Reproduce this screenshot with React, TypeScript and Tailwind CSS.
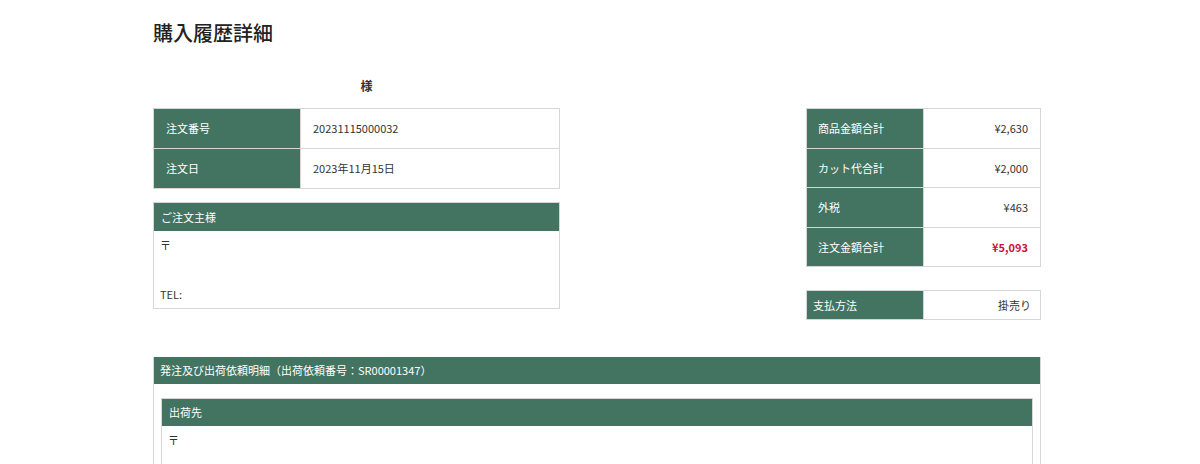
import React from 'react';

const font = { fontFamily: '"Noto Sans CJK JP", "Noto Sans", sans-serif' };

const orderRows = [
    { label: '注文番号', value: '20231115000032' },
    { label: '注文日', value: '2023年11月15日' },
];

const totals = [
    { label: '商品金額合計', value: '¥2,630' },
    { label: 'カット代合計', value: '¥2,000' },
    { label: '外税', value: '¥463' },
    { label: '注文金額合計', value: '¥5,093', red: true },
];

export default function App() {
    return (
        <div className="h-[464px] overflow-hidden bg-white text-[#333] pl-[153px]" style={font}>
            <div className="w-[888px]">
                <h1 className="text-[20px] font-medium leading-none pt-[23px] text-[#222]">購入履歴詳細</h1>

                <div className="flex justify-between mt-[37px]">
                    {/* left column */}
                    <div className="w-[407px]">
                        <p className="text-center text-[12px] font-bold leading-none pl-[20px] mb-[16px]">様</p>
                        <table className="w-full border-collapse text-[11px]">
                            <tbody>
                                {orderRows.map((r) => (
                                    <tr key={r.label} className="h-[40px]">
                                        <th className="w-[147px] bg-[#427461] text-white font-normal text-left pl-[12px] border border-[#d6d6d6]">{r.label}</th>
                                        <td className="pl-[12px] border border-[#d6d6d6]">{r.value}</td>
                                    </tr>
                                ))}
                            </tbody>
                        </table>

                        <div className="mt-[13px] border border-[#d6d6d6]">
                            <div className="bg-[#427461] text-white text-[11px] h-[28px] flex items-center px-[7px]">ご注文主様</div>
                            <div className="text-[11px] px-[6px] pt-[6px] pb-[6px] h-[77px] flex flex-col justify-between">
                                <span>〒</span>
                                <span>TEL:</span>
                            </div>
                        </div>
                    </div>

                    {/* right column */}
                    <div className="w-[235px] pt-[28px]">
                        <table className="w-full border-collapse text-[11px]">
                            <tbody>
                                {totals.map((r) => (
                                    <tr key={r.label} className="h-[39.5px]">
                                        <th className="w-[117px] bg-[#427461] text-white font-normal text-left pl-[11px] border border-[#d6d6d6]">{r.label}</th>
                                        <td className={`text-right pr-[12px] border border-[#d6d6d6] ${r.red ? 'text-[#d0103a] font-bold' : ''}`}>{r.value}</td>
                                    </tr>
                                ))}
                            </tbody>
                        </table>

                        <table className="w-full border-collapse text-[11px] mt-[23px]">
                            <tbody>
                                <tr className="h-[29px]">
                                    <th className="w-[117px] bg-[#427461] text-white font-normal text-left pl-[6px] border border-[#d6d6d6]">支払方法</th>
                                    <td className="text-right pr-[9px] border border-[#d6d6d6]">掛売り</td>
                                </tr>
                            </tbody>
                        </table>
                    </div>
                </div>

                {/* shipping section */}
                <div className="mt-[37px] border-x border-[#d6d6d6] h-[200px]">
                    <div className="bg-[#427461] text-white text-[11px] h-[27px] flex items-center px-[6px]">
                        発注及び出荷依頼明細（出荷依頼番号：SR00001347）
                    </div>
                    <div className="mx-[7px] mt-[14px] border border-[#d6d6d6] h-[120px]">
                        <div className="bg-[#427461] text-white text-[11px] h-[27px] flex items-center px-[7px]">出荷先</div>
                        <div className="text-[11px] px-[6px] pt-[6px]">〒</div>
                    </div>
                </div>
            </div>
        </div>
    );
}
